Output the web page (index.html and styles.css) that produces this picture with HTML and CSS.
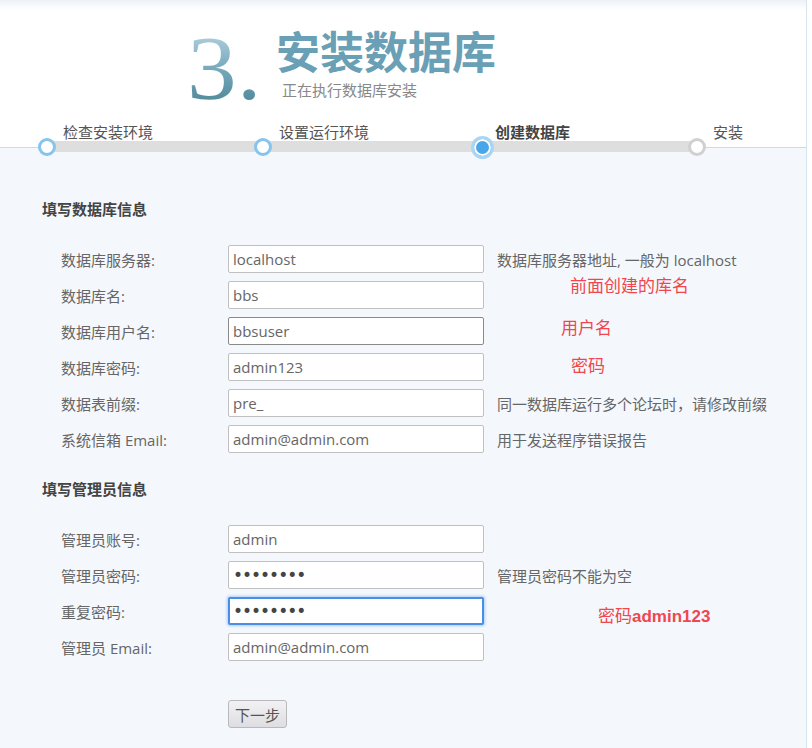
FILE: index.html
```html
<!DOCTYPE html>
<html lang="zh-CN">
<head>
<meta charset="utf-8">
<title>安装数据库</title>
<link rel="stylesheet" href="styles.css">
</head>
<body>
<div class="page">
  <header class="header">
    <div class="hero">
      <div class="num">3.</div>
      <div class="titles">
        <h1 class="title">安装数据库</h1>
        <p class="subtitle">正在执行数据库安装</p>
      </div>
    </div>
    <ol class="steps">
      <li class="step done"><span class="step-label">检查安装环境</span><span class="dot-slot"><span class="dot"></span></span></li>
      <li class="step done"><span class="step-label">设置运行环境</span><span class="dot-slot"><span class="dot"></span></span></li>
      <li class="step active"><span class="step-label">创建数据库</span><span class="dot-slot"><span class="dot"></span></span></li>
      <li class="step todo"><span class="step-label">安装</span><span class="dot-slot"><span class="dot"></span></span></li>
    </ol>
  </header>

  <main class="content">
    <h2 class="section-title">填写数据库信息</h2>
    <div class="form-grid">
      <label class="f-label">数据库服务器:</label>
      <input class="f-input" type="text" value="localhost">
      <span class="f-hint">数据库服务器地址, 一般为 localhost</span>

      <label class="f-label">数据库名:</label>
      <input class="f-input" type="text" value="bbs">
      <span class="f-hint"><span class="note note-dbname">前面创建的库名</span></span>

      <label class="f-label">数据库用户名:</label>
      <input class="f-input hover" type="text" value="bbsuser">
      <span class="f-hint"><span class="note note-user">用户名</span></span>

      <label class="f-label">数据库密码:</label>
      <input class="f-input" type="text" value="admin123">
      <span class="f-hint"><span class="note note-pass">密码</span></span>

      <label class="f-label">数据表前缀:</label>
      <input class="f-input" type="text" value="pre_">
      <span class="f-hint">同一数据库运行多个论坛时，请修改前缀</span>

      <label class="f-label">系统信箱 Email:</label>
      <input class="f-input" type="text" value="admin@admin.com">
      <span class="f-hint">用于发送程序错误报告</span>
    </div>

    <h2 class="section-title">填写管理员信息</h2>
    <div class="form-grid">
      <label class="f-label">管理员账号:</label>
      <input class="f-input" type="text" value="admin">
      <span class="f-hint"></span>

      <label class="f-label">管理员密码:</label>
      <input class="f-input pw" type="password" value="admin123">
      <span class="f-hint">管理员密码不能为空</span>

      <label class="f-label">重复密码:</label>
      <input class="f-input pw focus" type="password" value="admin123">
      <span class="f-hint"><span class="note note-admin">密码<b>admin123</b></span></span>

      <label class="f-label">管理员 Email:</label>
      <input class="f-input" type="text" value="admin@admin.com">
      <span class="f-hint"></span>
    </div>

    <div class="actions">
      <button class="btn" type="button">下一步</button>
    </div>
  </main>
</div>
</body>
</html>
```

FILE: styles.css
```css
* { box-sizing: border-box; }

html, body {
  margin: 0;
  padding: 0;
  background: #fff;
}

body {
  width: 812px;
  font-family: "Open Sans", "Noto Sans CJK SC", sans-serif;
  font-size: 15px;
  color: #666;
}

.page {
  width: 807px;
  border-right: 1px solid #d5e4ee;
}

/* ---------- header ---------- */
.header {
  background: linear-gradient(#edf2f6, #fff 10px);
  padding-top: 22px;
}

.hero {
  display: flex;
  height: 92px;
  padding-left: 187px;
}

.num {
  flex: none;
  width: 89px;
  font-family: "Liberation Serif", serif;
  font-size: 92px;
  line-height: 92px;
  transform: scaleX(1.08);
  transform-origin: left center;
  background: linear-gradient(#c3dde8, #7eaec1 45%, #43808f);
  -webkit-background-clip: text;
  background-clip: text;
  color: transparent;
}

.titles {
  padding-top: 10px;
}

.title {
  margin: 0;
  font-family: "Liberation Sans", "Noto Sans CJK SC", sans-serif;
  font-size: 44px;
  line-height: 44px;
  font-weight: bold;
  color: #6aa0b5;
}

.subtitle {
  margin: 4px 0 0 6px;
  font-size: 15px;
  line-height: 20px;
  color: #888;
}

/* ---------- steps ---------- */
.steps {
  position: relative;
  z-index: 1;
  list-style: none;
  margin: 9px 0 -12px;
  padding: 0 0 0 35px;
  display: grid;
  grid-template-columns: 216px 219px 215px 1fr;
  background: linear-gradient(#dedede, #dedede) no-repeat 47px 18px / 650px 11px;
}

.step {
  display: flex;
  flex-direction: column;
  align-items: flex-start;
}

.step-label {
  height: 18px;
  line-height: 18px;
  margin-left: 28px;
  font-size: 15px;
  color: #555;
  white-space: nowrap;
}

.step.active .step-label {
  margin-left: 25px;
  font-weight: bold;
  color: #444;
}

.dot-slot {
  width: 24px;
  height: 24px;
  margin-top: -6px;
  display: flex;
  align-items: center;
  justify-content: center;
}

.dot {
  width: 18px;
  height: 18px;
  border-radius: 50%;
  border: 3px solid #86c4ee;
  background: #fff;
}

.step.active .dot {
  width: 23px;
  height: 23px;
  border: 3px solid #aad6f5;
  background: #48a6ea;
  box-shadow: inset 0 0 0 2px #fff;
}

.step.todo .dot {
  border-color: #d0d0d0;
}

/* ---------- content ---------- */
.content {
  border-top: 1px solid #c5dcec;
  background: #f4f8fc;
  padding: 51px 0 40px 42px;
}

.section-title {
  margin: 0;
  font-size: 15px;
  line-height: 20px;
  font-weight: bold;
  color: #444;
}

.form-grid + .section-title {
  margin-top: 26px;
}

.form-grid {
  display: grid;
  grid-template-columns: 167px 256px auto;
  grid-auto-rows: 28px;
  row-gap: 8px;
  align-items: center;
  margin: 26px 0 0 19px;
}

.f-label {
  font-size: 15px;
  color: #666;
  white-space: nowrap;
}

.f-input {
  width: 256px;
  height: 28px;
  margin: 0;
  padding: 0 4px;
  border: 1px solid #c0c0c0;
  border-radius: 2px;
  background: #fff;
  font-family: "Open Sans", sans-serif;
  font-size: 15px;
  color: #666;
  outline: none;
}

.f-input.hover {
  border-color: #8a8a8a;
}

.f-input.pw {
  font-family: "DejaVu Sans", sans-serif;
  font-size: 17px;
  letter-spacing: -1px;
  color: #444;
}

.f-input.focus {
  border: 2px solid #4a8ee6;
  padding: 0 3px;
  box-shadow: 0 0 3px 1px #a9cdf4;
}

.f-hint {
  padding-left: 13px;
  font-size: 15px;
  color: #666;
  white-space: nowrap;
}

.note {
  position: relative;
  font-family: "Noto Sans CJK SC", sans-serif;
  font-size: 17px;
  color: #f0464e;
}

.note b {
  font-family: "Liberation Sans", sans-serif;
  font-weight: bold;
}

.note-dbname { margin-left: 73px; top: -11px; }
.note-user   { margin-left: 64px; top: -5px; }
.note-pass   { margin-left: 74px; top: -3px; }
.note-admin  { margin-left: 101px; top: 3px; }

.actions {
  padding: 39px 0 0 186px;
}

.btn {
  display: block;
  height: 28px;
  margin: 0;
  padding: 0 6px;
  border: 1px solid #b9b9bd;
  border-radius: 3px;
  background: linear-gradient(#f2f2f4, #dedee2);
  font-family: "Noto Sans CJK SC", sans-serif;
  font-size: 15px;
  color: #555;
}
```
